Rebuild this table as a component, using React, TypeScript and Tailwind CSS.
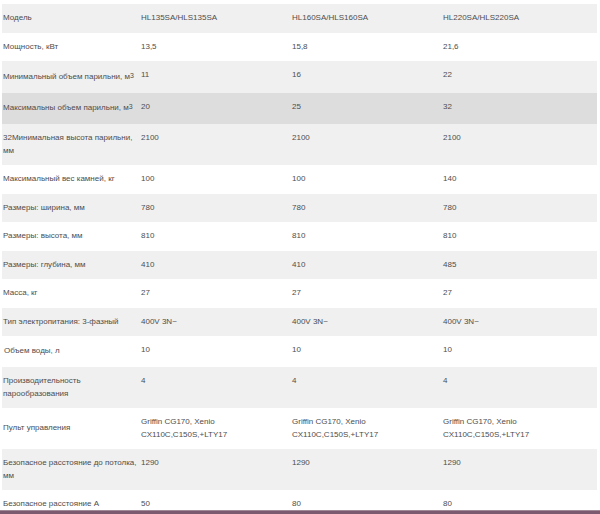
import React from "react";

type Row = { label: React.ReactNode; values: React.ReactNode[]; cls: string; h?: string };

const M3 = (
  <>
    м<sup className="text-[7px] leading-none relative -top-[1px]">3</sup>
  </>
);

const griffin = (
  <>
    Griffin CG170, Xenio
    <br />
    CX110C,C150S,+LTY17
  </>
);

const rows: Row[] = [
  { label: "Модель", values: ["HL135SA/HLS135SA", "HL160SA/HLS160SA", "HL220SA/HLS220SA"], cls: "bg-[#f0f0f0]" },
  { label: "Мощность, кВт", values: ["13,5", "15,8", "21,6"], cls: "bg-white" },
  { label: <>Минимальный объем парильни, {M3}</>, values: ["11", "16", "22"], cls: "bg-[#f0f0f0]", h: "h-[32px]" },
  { label: <>Максимальны объем парильни, {M3}</>, values: ["20", "25", "32"], cls: "bg-[#dddddd]", h: "h-[31px]" },
  { label: <>32Минимальная высота парильни, мм</>, values: ["2100", "2100", "2100"], cls: "bg-[#f0f0f0]" },
  { label: "Максимальный вес камней, кг", values: ["100", "100", "140"], cls: "bg-white" },
  { label: "Размеры: ширина, мм", values: ["780", "780", "780"], cls: "bg-[#f0f0f0]" },
  { label: "Размеры: высота, мм", values: ["810", "810", "810"], cls: "bg-white" },
  { label: "Размеры: глубина, мм", values: ["410", "410", "485"], cls: "bg-[#f0f0f0]" },
  { label: "Масса, кг", values: ["27", "27", "27"], cls: "bg-white" },
  { label: "Тип электропитания: 3-фазный", values: ["400V 3N~", "400V 3N~", "400V 3N~"], cls: "bg-[#f0f0f0]" },
  { label: <span className="pl-[1px]">Объем воды, л</span>, values: ["10", "10", "10"], cls: "bg-white", h: "h-[31px]" },
  { label: <>Производительность<br />парообразования</>, values: ["4", "4", "4"], cls: "bg-[#f0f0f0]" },
  { label: "Пульт управления", values: [griffin, griffin, griffin], cls: "bg-white" },
  { label: <>Безопасное расстояние до потолка, мм</>, values: ["1290", "1290", "1290"], cls: "bg-[#f0f0f0]" },
  { label: "Безопасное расстояние А", values: ["50", "80", "80"], cls: "bg-white" },
];

export default function App() {
  return (
    <div
      className="w-[600px] h-[514px] bg-white overflow-hidden relative text-[#4d4d4d]"
      style={{ fontFamily: '"Liberation Sans", Arial, sans-serif' }}
    >
      <div className="pt-[4px] pl-[2px]">
        <table className="border-collapse table-fixed w-[595px] text-[8px] leading-[12.5px]">
          <colgroup>
            <col className="w-[139px]" />
            <col className="w-[151px]" />
            <col className="w-[151px]" />
            <col className="w-[154px]" />
          </colgroup>
          <tbody>
            {rows.map((r, i) => (
              <tr key={i} className={`${r.cls} ${r.h ?? ""}`}>
                <td className="align-middle pt-[8px] pb-[8px] pl-[1px] pr-[2px]">{r.label}</td>
                {r.values.map((v, j) => (
                  <td key={j} className="align-top pt-[8px] pb-[8px] pl-0 pr-[2px]">
                    {v}
                  </td>
                ))}
              </tr>
            ))}
          </tbody>
        </table>
      </div>
      <div className="absolute left-0 right-0 top-[510px] h-[4px] bg-[#7b5a6f] border-t border-[#a08a98]" />
    </div>
  );
}
